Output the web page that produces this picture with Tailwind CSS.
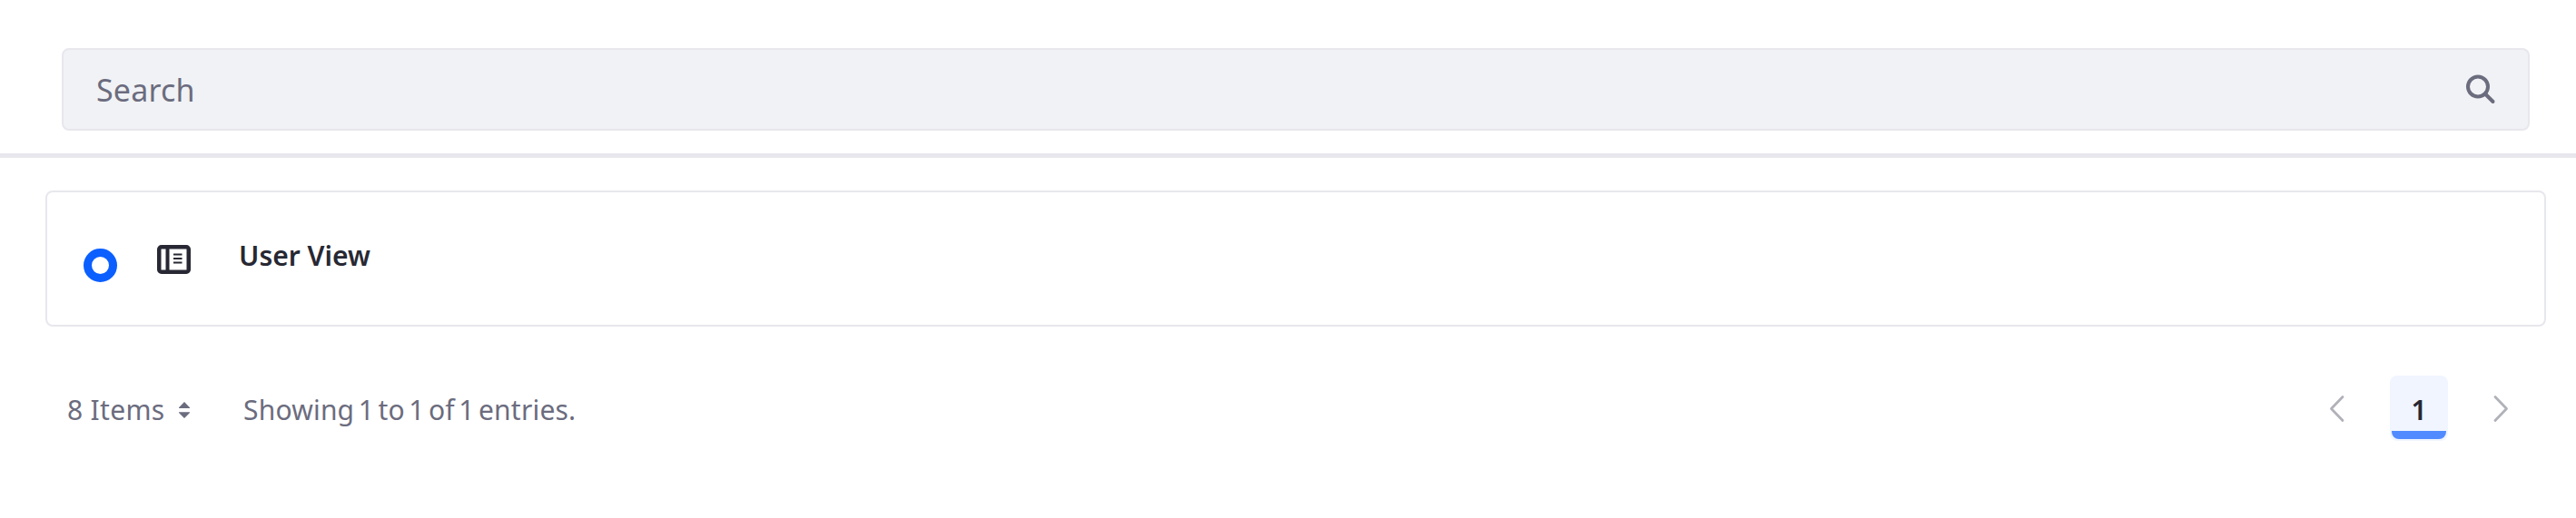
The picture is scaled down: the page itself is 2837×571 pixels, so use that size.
<!DOCTYPE html>
<html lang="en">
<head>
<meta charset="utf-8">
<title>Views</title>
<script src="https://cdn.jsdelivr.net/npm/@tailwindcss/browser@4"></script>
</head>
<body class="bg-white h-[571px] overflow-hidden font-['Noto_Sans',sans-serif] text-[#6b6c7e]">
  <header class="h-[174px] pt-[53px] pl-[68px] pr-[51px] border-b-[5px] border-[#e7e7ed]">
    <div class="h-[91px] rounded-lg border-2 border-[#e7e7ed] bg-[#f1f2f5] flex items-center justify-between pl-[36px] pr-[35px]">
      <span class="text-[34px] leading-[48px] tracking-[0.2px]">Search</span>
      <svg class="w-[34px] h-[34px] -mt-[2px]" viewBox="0 0 34 34" fill="none" stroke="#6b6c7e" stroke-width="4" stroke-linecap="round"><circle cx="14" cy="14.500" r="11"/><path d="M22 22.500 30.500 31"/></svg>
    </div>
  </header>
  <main class="pl-[50px] pr-[33px] pt-[36px]">
    <section class="h-[150px] rounded-lg border-2 border-[#e7e7ed] flex items-center pl-[40px] text-[#272833]">
      <span class="size-[37px] rounded-full border-[9.500px] border-[#0b5fff] mt-[15px]"></span>
      <svg class="w-[37px] h-[32px] ml-[44px] mt-[2px]" viewBox="0 0 37 32"><rect x="2.250" y="2.250" width="32.500" height="27.500" rx="2.500" fill="none" stroke="#272833" stroke-width="4.500"/><path d="M9.500 3h4v26h-4z" fill="#272833"/><path d="M18 10.500h9.500M18 15h9.500M18 19.500h9.500" stroke="#272833" stroke-width="2"/></svg>
      <span class="text-[30px] leading-[40px] font-semibold ml-[53px] -mt-[6px]">User View</span>
    </section>
    <footer class="h-[72px] mt-[54px] flex items-center justify-between pl-[24px] pr-[39px]">
      <div class="flex items-center text-[30px] leading-[40px] pt-[3px]">
        <span class="w-[123px] tracking-[0.3px]">8 Items</span>
        <svg class="w-[12px] h-[18px]" viewBox="0 0 12 18" fill="#6b6c7e"><path d="M6 0 12 6.200V7H0V6.200zM6 18 12 12V11.300H0V12z"/></svg>
        <span class="ml-[59px] tracking-[0.2px] [word-spacing:-3.600px]">Showing 1 to 1 of 1 entries.</span>
      </div>
      <nav class="flex items-center">
        <svg class="w-[22px] h-[32px]" viewBox="0 0 22 32" fill="none" stroke="#b1b2b9" stroke-width="2.800" stroke-linecap="round" stroke-linejoin="round"><path d="M17 3.500 4.500 16.500 17 29.500"/></svg>
        <span class="w-[64px] h-[72px] mx-[47px] rounded-lg bg-[#f0f5ff] px-[2px] pb-[2px] flex flex-col">
          <span class="grow overflow-hidden rounded-b-[8px] border-b-[9px] border-[#528bff] text-center text-[30px] leading-[75px] font-semibold text-[#272833]">1</span>
        </span>
        <svg class="w-[22px] h-[32px]" viewBox="0 0 22 32" fill="none" stroke="#b1b2b9" stroke-width="2.800" stroke-linecap="round" stroke-linejoin="round"><path d="M5 3.500 17.500 16.500 5 29.500"/></svg>
      </nav>
    </footer>
  </main>
</body>
</html>
